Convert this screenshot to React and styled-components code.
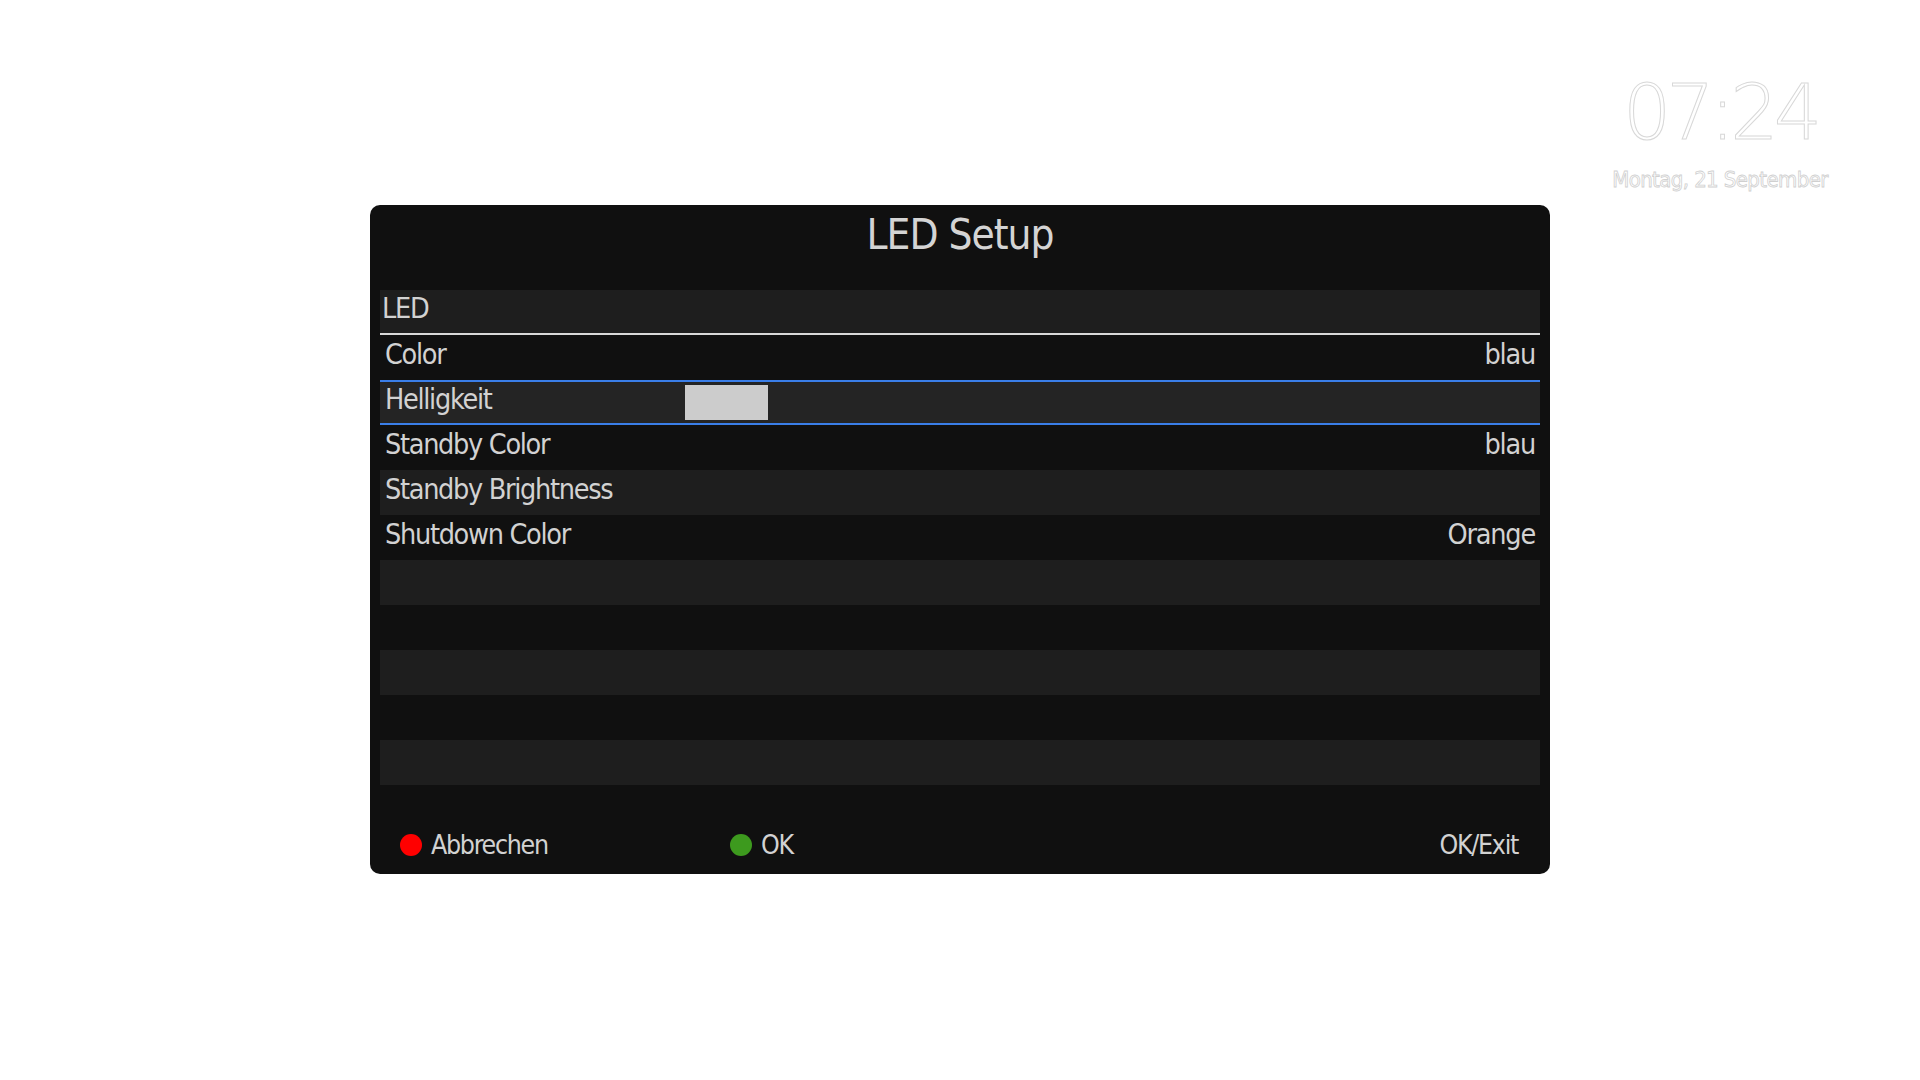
import React from 'react';
import styled, { createGlobalStyle } from 'styled-components';

const font = '"DejaVu Sans Condensed", "DejaVu Sans", sans-serif';

const rows = [
  { label: 'LED', header: true },
  { label: 'Color', value: 'blau' },
  { label: 'Helligkeit', slider: 83, selected: true },
  { label: 'Standby Color', value: 'blau' },
  { label: 'Standby Brightness' },
  { label: 'Shutdown Color', value: 'Orange' },
  {},
  {},
  {},
  {},
  {},
];

export default function App() {
  return (
    <Page>
      <Global />
      <TopBar>
        <Clock>
          <Time>07:24</Time>
          <DateLine>Montag, 21 September</DateLine>
        </Clock>
      </TopBar>

      <Panel>
        <Title>LED Setup</Title>

        <List>
          {rows.map((r, i) => (
            <Row key={i} $shaded={i % 2 === 0} $header={r.header} $selected={r.selected}>
              <Label>{r.label}</Label>
              {r.slider && <Slider style={{ width: r.slider }} />}
              {r.value && <Value>{r.value}</Value>}
            </Row>
          ))}
        </List>

        <Footer>
          <Key>
            <Dot $color="#ff0000" />
            Abbrechen
          </Key>
          <Key>
            <Dot $color="#3d9a1e" />
            OK
          </Key>
          <Hint>OK/Exit</Hint>
        </Footer>
      </Panel>
    </Page>
  );
}

const Global = createGlobalStyle`
  html, body {
    margin: 0;
    padding: 0;
    background: #ffffff;
  }
`;

const Page = styled.div`
  width: 1920px;
  height: 1080px;
  display: flex;
  flex-direction: column;
  font-family: ${font};
`;

const TopBar = styled.div`
  height: 205px;
  display: flex;
  justify-content: flex-end;
  padding-right: 60px;
  box-sizing: border-box;
`;

const Clock = styled.div`
  width: 280px;
  display: flex;
  flex-direction: column;
  align-items: center;
  padding-top: 73px;
  white-space: nowrap;
`;

const Time = styled.div`
  font-family: "DejaVu Sans", sans-serif;
  font-size: 76px;
  line-height: 80px;
  letter-spacing: -5px;
  color: #ffffff;
  -webkit-text-stroke: 1px #d8d8d8;
  font-weight: 200;
`;

const DateLine = styled.div`
  font-size: 22px;
  line-height: 26px;
  margin-top: 14px;
  letter-spacing: -0.6px;
  color: #ffffff;
  -webkit-text-stroke: 0.8px #d0d0d0;
`;

const Panel = styled.section`
  width: 1180px;
  height: 669px;
  margin: 0 auto;
  background: #101010;
  border-radius: 10px;
  display: flex;
  flex-direction: column;
  padding: 0 10px;
  box-sizing: border-box;
`;

const Title = styled.h1`
  margin: 0;
  height: 85px;
  display: flex;
  align-items: center;
  justify-content: center;
  font-weight: normal;
  font-size: 42px;
  letter-spacing: -1px;
  color: #d4d4d4;
  padding-bottom: 26px;
  box-sizing: border-box;
`;

const List = styled.div`
  display: flex;
  flex-direction: column;
`;

const Row = styled.div`
  height: 45px;
  box-sizing: border-box;
  display: flex;
  align-items: center;
  padding: 0 5px 6px 5px;
  background: ${(p) => (p.$selected ? '#242424' : p.$shaded ? '#1e1e1e' : 'transparent')};
  border-top: ${(p) => (p.$selected ? '2px solid #3a7ee8' : 'none')};
  border-bottom: ${(p) =>
    p.$selected ? '2px solid #3a7ee8' : p.$header ? '2px solid #d8d8d8' : 'none'};
  padding-left: ${(p) => (p.$header ? '2px' : '5px')};
`;

const Label = styled.span`
  font-size: 28.5px;
  letter-spacing: -1.3px;
  color: #d2d2d2;
  width: 300px;
  flex: none;
  white-space: nowrap;
`;

const Slider = styled.div`
  height: 35px;
  margin-top: 6px;
  background: #cccccc;
`;

const Value = styled.span`
  margin-left: auto;
  font-size: 28.5px;
  letter-spacing: -1.2px;
  color: #d2d2d2;
`;

const Footer = styled.div`
  flex: 1;
  display: flex;
  align-items: center;
  padding: 30px 22px 0 20px;
  font-size: 26.5px;
  letter-spacing: -1.3px;
  color: #d2d2d2;
`;

const Key = styled.div`
  width: 330px;
  display: flex;
  align-items: center;
  gap: 9px;
`;

const Dot = styled.span`
  width: 22px;
  height: 22px;
  border-radius: 50%;
  background: ${(p) => p.$color};
  flex: none;
`;

const Hint = styled.div`
  margin-left: auto;
`;
